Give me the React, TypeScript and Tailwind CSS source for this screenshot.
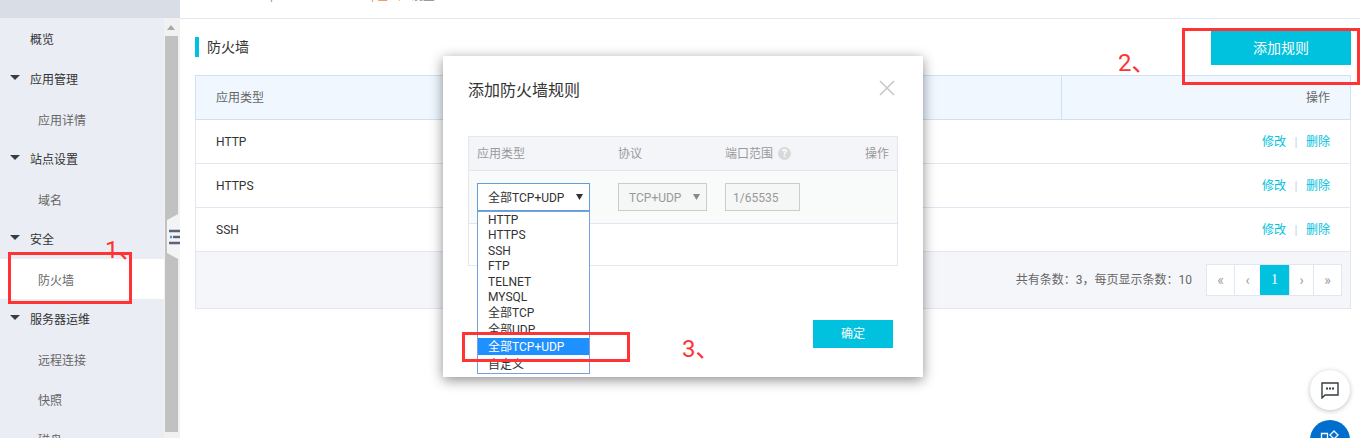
import React from "react";

const FONT = "font-['Roboto','Noto_Sans_CJK_SC',sans-serif]";

function Caret() {
  return (
    <svg width="10" height="5" viewBox="0 0 10 5" className="absolute left-[10px] top-[16px]">
      <path d="M0 0H10L5 5Z" fill="#373d41" />
    </svg>
  );
}

function NavItem({ label, level, active }: { label: string; level: number; active?: boolean }) {
  return (
    <div
      className={`relative flex h-10 shrink-0 items-center text-xs ${active ? "bg-white" : ""} ${
        level === 0 ? "pl-[30px] pt-[2px] text-[#333]" : "pl-[38px] pt-[3px] text-[#666]"
      }`}
    >
      {level === 0 && label !== "概览" && <Caret />}
      {label}
    </div>
  );
}

function Sidebar() {
  return (
    <aside className="flex h-full w-[180px] shrink-0 flex-col">
      <div className="h-[18px] shrink-0 bg-[#d9dee6]" />
      <div className="flex min-h-0 flex-1">
        <div className="flex w-[164px] flex-col overflow-hidden bg-[#eaedf3] pt-px">
          <NavItem label="概览" level={0} />
          <NavItem label="应用管理" level={0} />
          <NavItem label="应用详情" level={1} />
          <NavItem label="站点设置" level={0} />
          <NavItem label="域名" level={1} />
          <NavItem label="安全" level={0} />
          <NavItem label="防火墙" level={1} active />
          <NavItem label="服务器运维" level={0} />
          <NavItem label="远程连接" level={1} />
          <NavItem label="快照" level={1} />
          <NavItem label="磁盘" level={1} />
        </div>
        <div className="flex w-[16px] flex-col bg-[#f1f1f1] px-px">
          <div className="flex h-[18px] shrink-0 items-center justify-center pr-[2px]">
            <svg width="8" height="5" viewBox="0 0 8 5">
              <path d="M0 5L4 0L8 5Z" fill="#a8a8a8" />
            </svg>
          </div>
          <div className="h-[396px] w-[13px] bg-[#c1c1c1]" />
        </div>
      </div>
    </aside>
  );
}

function Row({ name }: { name: string }) {
  return (
    <div className="flex h-11 items-center justify-between border-b border-[#e1e6f0] px-5 text-xs text-[#333]">
      <span>{name}</span>
      <span className="flex items-center text-[#00c1de]">
        修改
        <span className="mx-[8.5px] text-[#c5d0e0]">|</span>
        删除
      </span>
    </div>
  );
}

function PageCell({ children, w, active }: { children: React.ReactNode; w: string; active?: boolean }) {
  return (
    <div
      className={`flex h-full items-center justify-center ${w} ${
        active
          ? "bg-[#00c1de] font-['Liberation_Serif',serif] text-[14px] text-white"
          : "border-l border-[#e1e6f0] text-[14px] text-[#a0a0a0]"
      }`}
    >
      {children}
    </div>
  );
}

function Main() {
  return (
    <main className="flex min-w-0 flex-1 flex-col pl-[15px] pr-[9px]">
      <div className="-ml-[15px] -mr-[9px] h-[19px] shrink-0 overflow-hidden border-b border-[#e1e6f0]">
        <div className="-mt-[12px] flex h-[16px] items-center pl-[90px] text-xs text-[#888]">
          <span>|</span>
          <span className="ml-[98px] text-[#e98a4d]">| 基础</span>
          <span className="ml-[10px]">设置</span>
        </div>
      </div>
      <div className="flex h-[56px] shrink-0 items-start justify-between pt-[12px]">
        <div className="mt-[6px] flex h-5 items-center border-l-4 border-[#00c1de] pl-2 text-sm text-[#333]">防火墙</div>
        <button className="h-[34px] w-[140px] bg-[#00c1de] text-sm text-white">添加规则</button>
      </div>
      <div className="border border-[#e1e6f0]">
        <div className="-mx-px -mt-px flex h-[45px] items-center border border-[#cfe2f5] bg-[#f0f7ff] text-xs text-[#666]">
          <div className="flex-1 pl-5">应用类型</div>
          <div className="flex h-full w-[289px] items-center justify-end border-l border-[#cfe2f5] pr-5">操作</div>
        </div>
        <Row name="HTTP" />
        <Row name="HTTPS" />
        <Row name="SSH" />
        <div className="flex h-[56px] items-center justify-end bg-[#f5f6fa] pr-2 text-xs text-[#666]">
          <span className="mr-[14px]">共有条数：3，每页显示条数：10</span>
          <div className="flex h-8 w-[136px] border border-l-0 border-[#e1e6f0] bg-white">
            <PageCell w="w-[28px]">«</PageCell>
            <PageCell w="w-[26px]">‹</PageCell>
            <PageCell w="w-[29px]" active>1</PageCell>
            <PageCell w="w-[24px]">›</PageCell>
            <PageCell w="w-[28px]">»</PageCell>
          </div>
        </div>
      </div>
    </main>
  );
}

const OPTIONS: [string, string][] = [
  ["HTTP", "h-[15px]"],
  ["HTTPS", "h-[16px]"],
  ["SSH", "h-[15px]"],
  ["FTP", "h-[16px]"],
  ["TELNET", "h-[15px]"],
  ["MYSQL", "h-[16px]"],
  ["全部TCP", "h-[16px]"],
  ["全部UDP", "h-[17px]"],
];

function SelectArrow({ color }: { color: string }) {
  return (
    <svg width="7" height="6" viewBox="0 0 7 6" className="absolute right-[6px] top-[10px]">
      <path d="M0 0H7L3.5 6Z" fill={color} />
    </svg>
  );
}

function Modal() {
  return (
    <div className="absolute left-[443px] top-[56px] flex h-[321px] w-[480px] flex-col bg-white px-[25px] shadow-[0_3px_12px_rgba(0,0,0,0.45)]">
      <div className="flex h-[80px] shrink-0 items-start justify-between pr-[3px] pt-[24px]">
        <span className="text-base leading-[22px] text-[#333]">添加防火墙规则</span>
        <svg width="16" height="16" viewBox="0 0 16 16">
          <path d="M1 1L15 15M15 1L1 15" stroke="#c8c8c8" strokeWidth="1.6" fill="none" />
        </svg>
      </div>
      <div className="h-[130px] w-[430px] shrink-0 border border-[#e1e6f0] text-xs">
        <div className="flex h-[34px] items-center border-b border-[#e1e6f0] bg-[#f4f5f9] px-2 text-[#999]">
          <span className="w-[141px]">应用类型</span>
          <span className="w-[107px]">协议</span>
          <span className="flex flex-1 items-center">
            端口范围
            <span className="ml-[5px] flex h-[13px] w-[13px] items-center justify-center rounded-full bg-[#d9d9d9] text-[10px] font-bold text-white">?</span>
          </span>
          <span>操作</span>
        </div>
        <div className="flex h-[53px] items-start border-b border-[#e1e6f0] bg-[#f9fafa] pl-2 pt-3">
          <div className="relative mr-[28px] w-[113px]">
            <div className="relative flex h-[28px] items-center border border-[#5f9fdc] bg-white pl-[10px] pt-px text-[#333]">
              全部TCP+UDP
              <SelectArrow color="#333" />
            </div>
            <div className="absolute left-0 top-[28px] z-10 flex h-[163px] w-[113px] flex-col border border-[#7b9fdb] bg-white text-[#333]">
              {OPTIONS.map(([o, h]) => (
                <div key={o} className={`flex shrink-0 items-center pl-[10px] ${h}`}>{o}</div>
              ))}
              <div className="flex h-[17px] shrink-0 items-center bg-[#1e90ff] pl-[10px] text-white">全部TCP+UDP</div>
              <div className="flex h-[18px] shrink-0 items-center pl-[10px] pt-[2px]">自定义</div>
            </div>
          </div>
          <div className="relative mr-[18px] flex h-[28px] w-[89px] items-center border border-[#ccc] bg-[#f5f6f6] pl-[10px] pt-px text-[#999]">
            TCP+UDP
            <SelectArrow color="#888" />
          </div>
          <div className="flex h-[28px] w-[75px] items-center border border-[#ccc] bg-[#f5f6f6] pl-[7px] pt-px text-[#999]">1/65535</div>
        </div>
      </div>
      <div className="flex flex-1 justify-end pr-[5px] pt-[54px]">
        <button className="h-[28px] w-[80px] bg-[#00c1de] text-xs text-white">确定</button>
      </div>
    </div>
  );
}

function Annotations() {
  return (
    <>
      <div className="absolute left-[8px] top-[252px] z-20 h-[52px] w-[124px] border-[3px] border-[#ff3333]" />
      <div className="absolute left-[1182px] top-[28px] z-20 h-[57px] w-[178px] border-[3px] border-[#ff3333]" />
      <div className="absolute left-[462px] top-[332px] z-20 h-[30px] w-[168px] border-[3px] border-[#ff3333]" />
      <span className="absolute left-[105px] top-[234px] z-20 text-2xl leading-[32px] text-[#ff3333]">1、</span>
      <span className="absolute left-[1118px] top-[47px] z-20 text-2xl leading-[32px] text-[#ff3333]">2、</span>
      <span className="absolute left-[682px] top-[333px] z-20 text-2xl leading-[32px] text-[#ff3333]">3、</span>
    </>
  );
}

function Handle() {
  return (
    <svg width="13" height="48" viewBox="0 0 13 48" className="absolute left-[167px] top-[213px] z-10">
      <path d="M0 7L13 0V47L0 40Z" fill="#f3f4f6" />
      <path d="M2 18H13M2 30H13" stroke="#5a6478" strokeWidth="2.6" fill="none" />
      <path d="M6 24H13" stroke="#5a6478" strokeWidth="2.4" fill="none" />
      <path d="M3 24H5" stroke="#4a90d9" strokeWidth="2.4" fill="none" />
    </svg>
  );
}

function Fabs() {
  return (
    <>
      <div className="absolute left-[1310px] top-[370px] flex h-10 w-10 items-center justify-center rounded-full bg-white shadow-[0_1px_5px_rgba(0,0,0,0.25)]">
        <svg width="18" height="17" viewBox="0 0 18 17">
          <path d="M1 1H17V13H4L1 16Z" fill="none" stroke="#373d41" strokeWidth="1.4" />
          <path d="M5 6.5H7M8 6.5H10M11 6.5H13" stroke="#373d41" strokeWidth="2" />
        </svg>
      </div>
      <div className="absolute left-[1310px] top-[420px] flex h-10 w-10 items-start justify-center rounded-full bg-[#006ecc] pt-[10px]">
        <svg width="20" height="14" viewBox="0 0 20 14">
          <path d="M1.5 3.5H7.5V11H1.5Z" fill="none" stroke="#fff" strokeWidth="1.3" />
          <path d="M14 1L18 5L14 9L10 5Z" fill="none" stroke="#fff" strokeWidth="1.3" />
        </svg>
      </div>
    </>
  );
}

export default function App() {
  return (
    <div className={`relative flex h-[438px] w-[1360px] overflow-hidden bg-white ${FONT}`}>
      <Sidebar />
      <Main />
      <Handle />
      <Modal />
      <Fabs />
      <Annotations />
    </div>
  );
}
